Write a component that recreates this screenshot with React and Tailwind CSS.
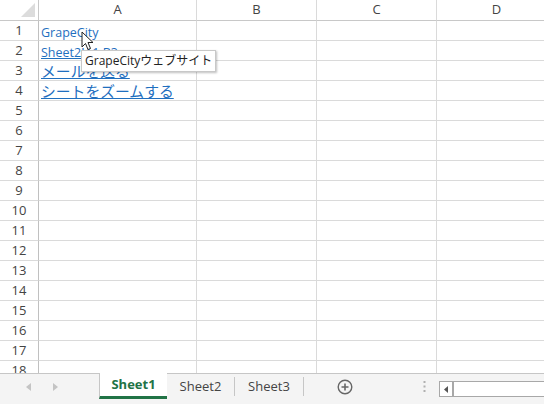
import React from 'react';

const font = { fontFamily: '"Open Sans", "Noto Sans CJK JP", sans-serif' };

const cols = ['A', 'B', 'C', 'D'];
const rows = Array.from({ length: 18 }, (_, i) => i + 1);

const Cell = ({ r, c }) => {
    let content = null;
    if (c === 0 && r === 1) content = <span className="text-[12.5px] text-[#1f6fbf]">GrapeCity</span>;
    if (c === 0 && r === 2) content = <span className="text-[12.5px] text-[#1f6fbf] underline">Sheet2!A1:B3</span>;
    if (c === 0 && r === 3) content = <span className="text-[14.8px] text-[#1f6fbf] underline">メールを送る</span>;
    if (c === 0 && r === 4) content = <span className="text-[14.8px] text-[#1f6fbf] underline">シートをズームする</span>;
    return (
        <div className="h-[20px] border-r border-b border-[#dadada] flex items-end pl-[2px] pb-[1px] overflow-visible whitespace-nowrap leading-none">
            {content}
        </div>
    );
};

const App = () => {
    return (
        <div className="w-[544px] h-[404px] bg-white overflow-hidden flex flex-col relative" style={font}>
            <div className="flex-1 overflow-hidden">
                <div className="grid grid-cols-[39px_158px_120px_120px_120px] text-[13px] text-[#444]">
                    <div className="h-[21px] border-r border-b border-[#c8c8c8] relative">
                        <svg className="absolute right-[3px] bottom-[3px]" width="14" height="14" viewBox="0 0 14 14">
                            <polygon points="14,0 14,14 0,14" fill="#dcdcdc" />
                        </svg>
                    </div>
                    {cols.map(c => (
                        <div key={c} className="h-[21px] border-r border-b border-r-[#dadada] border-b-[#c8c8c8] flex items-center justify-center">{c}</div>
                    ))}
                    {rows.map(r => (
                        <React.Fragment key={r}>
                            <div className="h-[20px] border-r border-b border-r-[#c0c0c0] border-b-[#dadada] flex items-center justify-center">{r}</div>
                            {[0, 1, 2, 3].map(c => <Cell key={c} r={r} c={c} />)}
                        </React.Fragment>
                    ))}
                </div>
            </div>

            {/* tooltip */}
            <div className="absolute left-[81px] top-[50px] h-[22px] px-[3px] bg-white border border-[#c8c8c8] shadow-[1px_1px_2px_rgba(0,0,0,0.25)] text-[12px] text-[#222] flex items-center whitespace-nowrap">
                GrapeCityウェブサイト
            </div>

            {/* cursor */}
            <svg className="absolute left-[81px] top-[31px]" width="14" height="20" viewBox="0 0 14 20">
                <path d="M1 1 L1 16 L4.5 12.5 L7 18.5 L9.5 17.5 L7 11.5 L12 11.5 Z" fill="white" stroke="#222" strokeWidth="1" strokeLinejoin="round" />
            </svg>

            {/* tab bar */}
            <div className="h-[31px] shrink-0 bg-[#f4f4f4] border-t border-[#c6c6c6] flex items-start text-[13px]">
                <div className="w-[99px] h-[25px] flex items-center pl-[26px] gap-[22px]">
                    <svg width="5" height="8" viewBox="0 0 5 8"><polygon points="5,0 5,8 0,4" fill="#c4c4c4" /></svg>
                    <svg width="5" height="8" viewBox="0 0 5 8"><polygon points="0,0 0,8 5,4" fill="#c4c4c4" /></svg>
                </div>
                <div className="w-[68px] h-[26px] -mt-px bg-white border-l border-[#c6c6c6] border-b-[3px] border-b-[#217346] flex items-center justify-center font-bold text-[#217346]">Sheet1</div>
                <div className="w-[68px] h-[19px] my-[3px] flex items-center justify-center text-[#444] border-r border-[#c6c6c6]">Sheet2</div>
                <div className="w-[69px] h-[19px] my-[3px] flex items-center justify-center text-[#444] border-r border-[#c6c6c6]">Sheet3</div>
                <div className="w-[82px] h-[25px] flex items-center justify-center">
                    <svg width="16" height="16" viewBox="0 0 16 16">
                        <circle cx="8" cy="8" r="6.8" fill="none" stroke="#666" strokeWidth="1.4" />
                        <path d="M8 4.5 V11.5 M4.5 8 H11.5" stroke="#666" strokeWidth="1.6" />
                    </svg>
                </div>
                <div className="w-[53px] h-[25px] flex items-center justify-end pr-[13px]">
                    <svg width="3" height="11" viewBox="0 0 3 11">
                        <rect x="0.5" y="0" width="2" height="2" fill="#b0b0b0" />
                        <rect x="0.5" y="4.5" width="2" height="2" fill="#b0b0b0" />
                        <rect x="0.5" y="9" width="2" height="2" fill="#b0b0b0" />
                    </svg>
                </div>
                <div className="flex-1 h-[16px] mt-[7px] bg-white border border-[#a8a8a8] border-r-0 flex">
                    <div className="w-[14px] h-full border-r-2 border-[#a8a8a8] flex items-center justify-center">
                        <svg width="4" height="7" viewBox="0 0 4 7"><polygon points="4,0 4,7 0,3.5" fill="#555" /></svg>
                    </div>
                </div>
            </div>
        </div>
    );
};

export default App;
